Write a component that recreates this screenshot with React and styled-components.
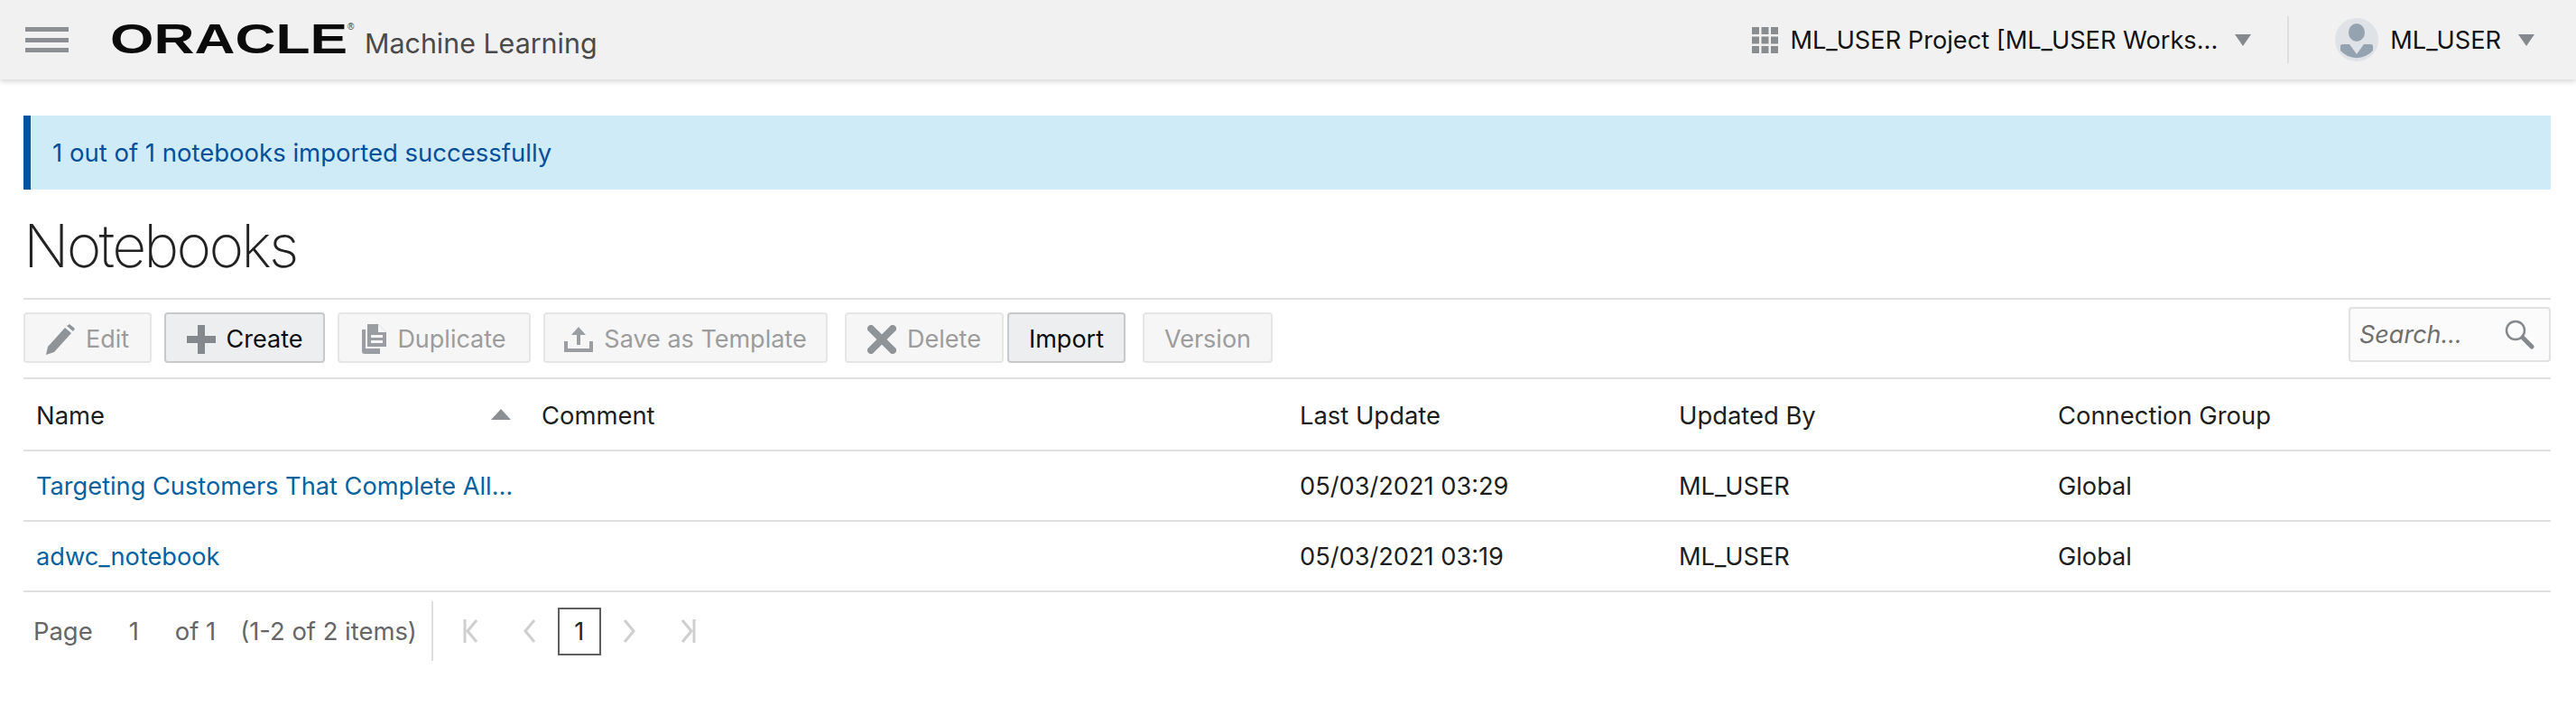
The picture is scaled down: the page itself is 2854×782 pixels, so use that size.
import React from 'react';
import styled, {createGlobalStyle} from 'styled-components';

const GlobalStyle = createGlobalStyle`
  html, body {
    margin: 0;
    padding: 0;
    background: #fff;
    font-family: Inter, "Liberation Sans", sans-serif;
  }
`;

const rows = [
  {name: 'Targeting Customers That Complete All Steps', updated: '05/03/2021 03:29', by: 'ML_USER', group: 'Global'},
  {name: 'adwc_notebook', updated: '05/03/2021 03:19', by: 'ML_USER', group: 'Global'},
];

const PencilIcon = () => (
  <svg width="32" height="34" viewBox="0 0 32 34">
    <path d="M0 34 L2 25 L21 4 L28 10 L9 31 Z" fill="#8f9498" />
    <path d="M23 2 L26 0 L32 5 L30 8 Z" fill="#8f9498" />
  </svg>
);

const PlusIcon = () => (
  <svg width="32" height="32" viewBox="0 0 32 32">
    <path d="M12 0 H20 V12 H32 V20 H20 V32 H12 V20 H0 V12 H12 Z" fill="#85898d" />
  </svg>
);

const DuplicateIcon = () => (
  <svg width="27" height="33" viewBox="0 0 27 33">
    <path d="M0 6 H4 V27 H20 V33 H3 Q0 33 0 30 Z" fill="#9a9ea2" />
    <path d="M6 0 H18 L27 9 V25 H6 Z" fill="#9a9ea2" />
    <path d="M18 0 V9 H27 Z" fill="#f6f6f6" />
    <path d="M10 12 H23 V15 H10 Z M10 18 H23 V21 H10 Z" fill="#f6f6f6" />
  </svg>
);

const UploadIcon = () => (
  <svg width="32" height="28" viewBox="0 0 32 28">
    <path d="M16 0 L24 9 H18 V20 H14 V9 H8 Z" fill="#9a9ea2" />
    <path d="M0 16 H4 V24 H28 V16 H32 V28 H0 Z" fill="#9a9ea2" />
  </svg>
);

const CrossIcon = () => (
  <svg width="32" height="32" viewBox="0 0 32 32">
    <path d="M4 4 L28 28 M28 4 L4 28" stroke="#8f9498" strokeWidth="8" strokeLinecap="round" />
  </svg>
);

const SearchIcon = () => (
  <svg width="33" height="33" viewBox="0 0 33 33">
    <circle cx="12" cy="12" r="10" fill="none" stroke="#85898d" strokeWidth="2.5" />
    <path d="M20 20 L30 30" stroke="#85898d" strokeWidth="5" strokeLinecap="round" />
  </svg>
);

const GridIcon = () => (
  <svg width="29" height="29" viewBox="0 0 29 29">
    {[0, 10.5, 21].map(y => [0, 10.5, 21].map(x => (
      <rect key={`${x}-${y}`} x={x} y={y} width="8" height="8" fill="#8a8d90" />
    )))}
  </svg>
);

const AvatarIcon = () => (
  <svg width="48" height="48" viewBox="0 0 48 48">
    <circle cx="24" cy="24" r="24" fill="#dfe2e6" />
    <ellipse cx="24" cy="16" rx="9" ry="10" fill="#94a3af" />
    <path d="M6 31 Q6 29 9 29 H16 L24 40 L32 29 H39 Q42 29 42 31 V36 A24 24 0 0 1 6 36 Z" fill="#94a3af" />
  </svg>
);

const PagerIcon = ({bar, flip}) => (
  <svg width="16" height="28" viewBox="0 0 16 28" style={{transform: flip ? 'scaleX(-1)' : 'none'}}>
    {bar && <path d="M2 1 V27" stroke="#cfcfcf" strokeWidth="3" fill="none" />}
    <path d={bar ? 'M15 2 L5 14 L15 26' : 'M13 2 L3 14 L13 26'} stroke="#cfcfcf" strokeWidth="3" fill="none" />
  </svg>
);

const App = () => {
  return (
    <>
      <GlobalStyle />
      <Header>
        <Hamburger>
          <span /><span /><span />
        </Hamburger>
        <Logo>
          <svg width="272" height="52" viewBox="0 0 272 52">
            <text x="0" y="42" textLength="263" lengthAdjust="spacingAndGlyphs" fontFamily="Liberation Sans" fontWeight="700" fontSize="47" fill="#0b0b0b">ORACLE</text>
            <text x="263" y="16" fontFamily="Liberation Sans" fontSize="10" fill="#333">®</text>
          </svg>
        </Logo>
        <AppName>Machine Learning</AppName>
        <HeaderRight>
          <GridIcon />
          <HeaderText>ML_USER Project [ML_USER Works...</HeaderText>
          <Caret />
          <HeaderDivider />
          <AvatarIcon />
          <HeaderText>ML_USER</HeaderText>
          <Caret />
        </HeaderRight>
      </Header>
      <Main>
        <Banner>1 out of 1 notebooks imported successfully</Banner>
        <Title>Notebooks</Title>
        <Toolbar>
          <ButtonGroup $gap={14}>
            <ToolButton $width={142} disabled><PencilIcon />Edit</ToolButton>
            <ToolButton $width={178}><PlusIcon />Create</ToolButton>
            <ToolButton $width={214} disabled><DuplicateIcon />Duplicate</ToolButton>
            <ToolButton $width={315} disabled><UploadIcon />Save as Template</ToolButton>
          </ButtonGroup>
          <ButtonGroup $gap={4}>
            <ToolButton $width={176} disabled><CrossIcon />Delete</ToolButton>
            <ToolButton $width={131}>Import</ToolButton>
          </ButtonGroup>
          <ToolButton $width={144} disabled>Version</ToolButton>
          <SearchBox>
            <SearchText>Search...</SearchText>
            <SearchIcon />
          </SearchBox>
        </Toolbar>
        <Table>
          <colgroup>
            <col style={{width: '20%'}} />
            <col style={{width: '30%'}} />
            <col style={{width: '15%'}} />
            <col style={{width: '15%'}} />
            <col style={{width: '20%'}} />
          </colgroup>
          <thead>
            <tr>
              <Th><NameHead>Name<SortArrow /></NameHead></Th>
              <Th>Comment</Th>
              <Th>Last Update</Th>
              <Th>Updated By</Th>
              <Th>Connection Group</Th>
            </tr>
          </thead>
          <tbody>
            {rows.map((row) => (
              <tr key={row.name}>
                <Td><NameLink>{row.name}</NameLink></Td>
                <Td />
                <Td>{row.updated}</Td>
                <Td>{row.by}</Td>
                <Td>{row.group}</Td>
              </tr>
            ))}
          </tbody>
        </Table>
        <Pager>
          <PagerInfo>
            <span>Page</span>
            <span>1</span>
            <span>of 1</span>
            <span>(1-2 of 2 items)</span>
          </PagerInfo>
          <PagerDivider />
          <PagerNav>
            <NavPair>
              <PagerIcon bar />
              <PagerIcon />
            </NavPair>
            <CurrentPage>1</CurrentPage>
            <NavPair>
              <PagerIcon flip />
              <PagerIcon bar flip />
            </NavPair>
          </PagerNav>
        </Pager>
      </Main>
    </>
  );
};

const Header = styled.header`
  height: 88px;
  background: #f1f1f1;
  box-shadow: 0 2px 6px rgba(0, 0, 0, .18);
  display: flex;
  align-items: center;
  padding: 0 46px 0 28px;
  box-sizing: border-box;
`;

const Hamburger = styled.div`
  width: 48px;
  height: 28px;
  display: flex;
  flex-direction: column;
  justify-content: space-between;
  margin-right: 46px;
  span {
    display: block;
    height: 5px;
    background: #8c9094;
  }
`;

const Logo = styled.div`
  width: 282px;
  height: 52px;
  margin-top: -2px;
`;

const AppName = styled.div`
  font-size: 30.4px;
  color: #4a4a4a;
  margin-top: 8px;
`;

const HeaderRight = styled.div`
  margin-left: auto;
  display: flex;
  align-items: center;
  gap: 13px;
`;

const HeaderText = styled.span`
  font-size: 27.2px;
  color: #111;
`;

const Caret = styled.span`
  width: 0;
  height: 0;
  margin-left: 6px;
  border-left: 9px solid transparent;
  border-right: 9px solid transparent;
  border-top: 13px solid #85898d;
`;

const HeaderDivider = styled.span`
  width: 2px;
  height: 52px;
  background: #dedede;
  margin: 0 38px 0 27px;
`;

const Main = styled.main`
  padding: 40px 28px 0 26px;
`;

const Banner = styled.div`
  height: 82px;
  box-sizing: border-box;
  background: #d0ebf8;
  border-left: 8px solid #04539f;
  display: flex;
  align-items: center;
  padding-left: 24px;
  font-size: 27.5px;
  color: #04509a;
`;

const Title = styled.h1`
  height: 120px;
  box-sizing: border-box;
  padding-top: 4px;
  margin: 0;
  display: flex;
  align-items: center;
  font-size: 66px;
  font-weight: 200;
  letter-spacing: -2.8px;
  color: #222;
`;

const Toolbar = styled.div`
  display: flex;
  align-items: flex-start;
  gap: 19px;
  height: 90px;
  box-sizing: border-box;
  padding-top: 14px;
  border-top: 2px solid #e0e0e0;
  border-bottom: 2px solid #e0e0e0;
`;

const ButtonGroup = styled.div`
  display: flex;
  gap: ${props => props.$gap}px;
`;

const ToolButton = styled.button`
  width: ${props => props.$width}px;
  height: 56px;
  box-sizing: border-box;
  padding: 3px 0 0;
  display: flex;
  align-items: center;
  justify-content: center;
  gap: 12px;
  font-family: inherit;
  font-size: 27px;
  line-height: 1;
  border-radius: 4px;
  border: 2px solid ${props => props.disabled ? '#e6e6e6' : '#c8c9cb'};
  background: ${props => props.disabled ? '#f6f6f6' : '#edeef0'};
  color: ${props => props.disabled ? '#9c9c9c' : '#0c0c0c'};
`;

const SearchBox = styled.div`
  margin-left: auto;
  margin-top: -6px;
  width: 224px;
  height: 61px;
  box-sizing: border-box;
  border: 2px solid #e2e2e2;
  border-radius: 4px;
  background: #fbfbfb;
  display: flex;
  align-items: center;
  justify-content: space-between;
  padding: 0 16px 0 10px;
`;

const SearchText = styled.span`
  font-size: 27px;
  font-style: italic;
  color: #6f6f6f;
`;

const Table = styled.table`
  width: 100%;
  table-layout: fixed;
  border-collapse: collapse;
`;

const Th = styled.th`
  height: 79px;
  box-sizing: border-box;
  padding: 2px 14px 0;
  text-align: left;
  font-size: 27.4px;
  font-weight: 400;
  color: #1d1d1d;
  border-bottom: 2px solid #e0e0e0;
`;

const NameHead = styled.div`
  display: flex;
  align-items: center;
  justify-content: space-between;
  padding-right: 6px;
`;

const SortArrow = styled.span`
  width: 0;
  height: 0;
  border-left: 11px solid transparent;
  border-right: 11px solid transparent;
  border-bottom: 12px solid #8c9094;
  margin-top: -2px;
`;

const Td = styled.td`
  height: 78px;
  box-sizing: border-box;
  padding: 0 12px 0 14px;
  font-size: 27.2px;
  color: #1d1d1d;
  border-bottom: 2px solid #e0e0e0;
`;

const NameLink = styled.a`
  display: block;
  color: #04629f;
  overflow: hidden;
  white-space: nowrap;
  text-overflow: ellipsis;
`;

const Pager = styled.div`
  display: flex;
  align-items: center;
  padding-top: 10px;
`;

const PagerInfo = styled.div`
  display: flex;
  align-items: center;
  gap: 40px;
  padding: 0 16px 0 11px;
  font-size: 27.4px;
  color: #666;
  span:last-child {
    margin-left: -13px;
  }
`;

const PagerDivider = styled.span`
  width: 2px;
  height: 66px;
  background: #dedede;
`;

const PagerNav = styled.div`
  display: flex;
  align-items: center;
  gap: 23px;
  padding-left: 33px;
`;

const NavPair = styled.div`
  display: flex;
  align-items: center;
  gap: 50px;
`;

const CurrentPage = styled.span`
  width: 48px;
  height: 53px;
  box-sizing: border-box;
  border: 2px solid #5f5f5f;
  display: flex;
  align-items: center;
  justify-content: center;
  font-size: 27px;
  color: #222;
`;

export default App;
